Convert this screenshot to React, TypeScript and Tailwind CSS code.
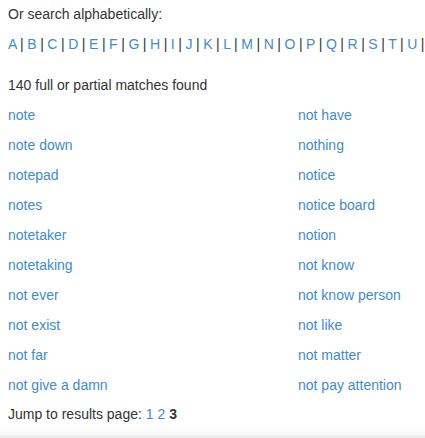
import React, { FC } from "react";

const letters = "ABCDEFGHIJKLMNOPQRSTU".split("");

const left = [
  "note",
  "note down",
  "notepad",
  "notes",
  "notetaker",
  "notetaking",
  "not ever",
  "not exist",
  "not far",
  "not give a damn",
];

const right = [
  "not have",
  "nothing",
  "notice",
  "notice board",
  "notion",
  "not know",
  "not know person",
  "not like",
  "not matter",
  "not pay attention",
];

const Link: FC<{ children: React.ReactNode }> = ({ children }) => (
  <a href="#" className="text-[#428bca] no-underline">
    {children}
  </a>
);

export default function App() {
  return (
    <div className="w-[425px] h-[438px] bg-white text-[#333] text-[14px] leading-[20px] font-['Liberation_Sans',Arial,sans-serif] flex flex-col overflow-hidden">
      <div className="px-2 pt-[4px] flex-1">
        <p>Or search alphabetically:</p>
        <p className="mt-[10px] whitespace-nowrap [word-spacing:-0.35px]">
          {letters.map((l, i) => (
            <React.Fragment key={l}>
              <Link>{l}</Link>
              {i < letters.length - 1 ? " | " : " |"}
            </React.Fragment>
          ))}
        </p>
        <p className="mt-[21px]">140 full or partial matches found</p>
        <div className="mt-[10px] grid grid-cols-[290px_1fr] gap-y-[10px]">
          {left.map((l, i) => (
            <React.Fragment key={l}>
              <div>
                <Link>{l}</Link>
              </div>
              <div>
                <Link>{right[i]}</Link>
              </div>
            </React.Fragment>
          ))}
        </div>
        <p className="mt-[9px]">
          Jump to results page: <Link>1</Link> <Link>2</Link> <b>3</b>
        </p>
      </div>
      <div className="h-[14px] bg-gradient-to-b from-white to-[#f8f8f8]" />
      <div className="h-[4px] bg-[#eeeeee]" />
    </div>
  );
}
